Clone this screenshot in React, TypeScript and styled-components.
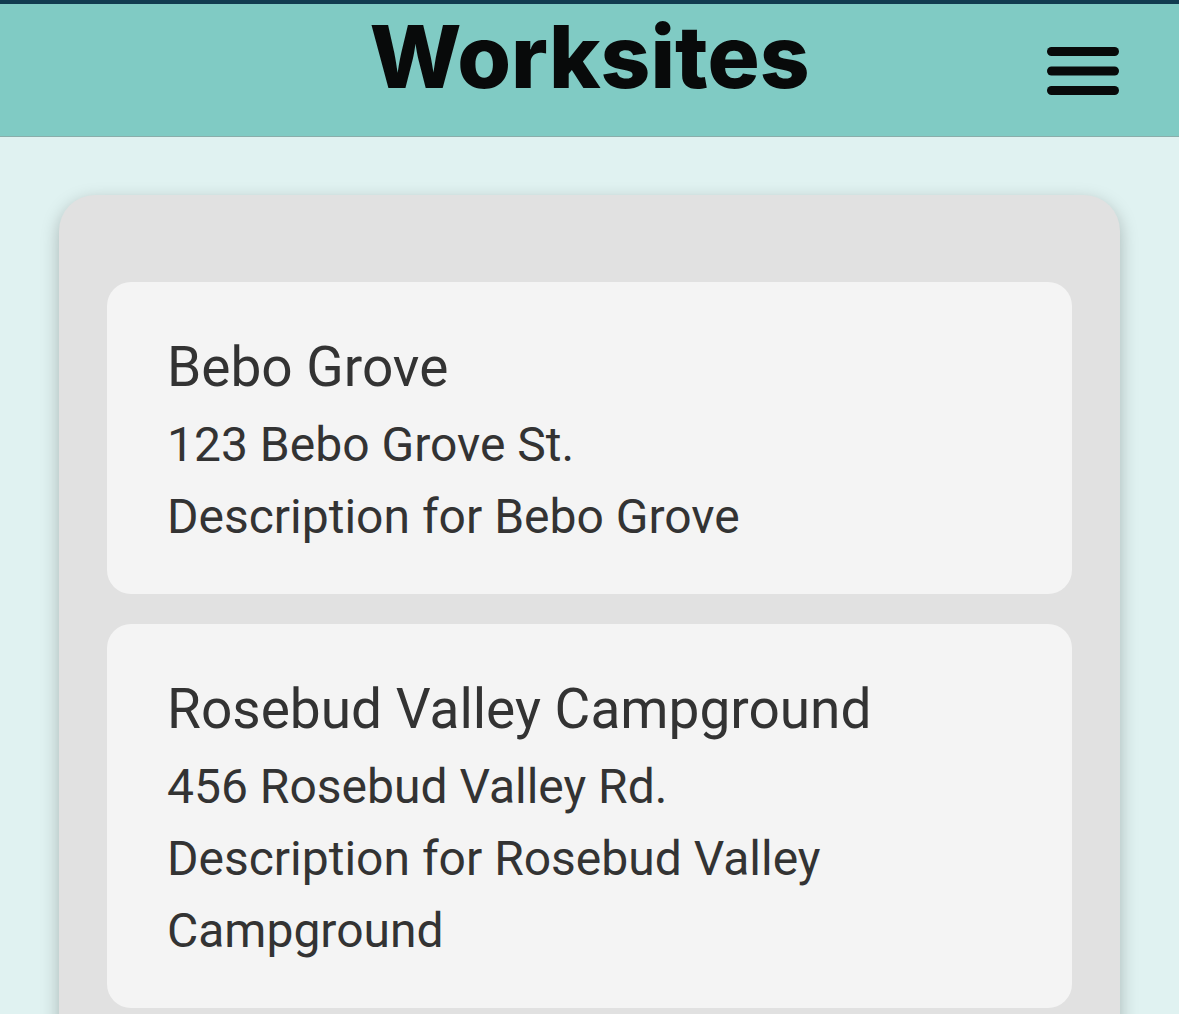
import React from "react";
import styled, { createGlobalStyle } from "styled-components";

const GlobalStyle = createGlobalStyle`
  * { box-sizing: border-box; }
  body {
    margin: 0;
    background: #e0f2f1;
    color: #333333;
    font-family: Roboto, "Liberation Sans", sans-serif;
  }
  #root { height: 100vh; overflow: hidden; }
`;

const Header = styled.header`
  display: grid;
  grid-template-columns: 1fr auto 1fr;
  height: 137px;
  border-top: 4px solid #113c50;
  border-bottom: 1px solid #8aaeab;
  background: #80cbc4;
`;

const Title = styled.h1`
  grid-column: 2;
  margin: 0;
  color: #080a0a;
  font: 800 87px/106px Inter, sans-serif;
`;

const MenuButton = styled.button`
  justify-self: end;
  display: flex;
  align-items: center;
  padding: 2px 60px 0 0;
  border: 0;
  background: none;
  color: #080a0a;
`;

const Main = styled.main`
  padding: 58px 59px;
`;

const Panel = styled.ul`
  display: flex;
  flex-direction: column;
  gap: 30px;
  margin: 0;
  padding: 87px 48px;
  list-style: none;
  border-radius: 36px;
  background: #e1e1e1;
  box-shadow: 0 6px 18px rgba(0, 0, 0, 0.25);
`;

const Card = styled.li`
  padding: 48px 60px 41px;
  border-radius: 24px;
  background: #f4f4f4;
`;

const Name = styled.h2`
  margin: 0 0 5px;
  font-size: 55px;
  font-weight: 400;
  line-height: 74px;
`;

const Detail = styled.p`
  margin: 0;
  font-size: 48px;
  line-height: 72px;
`;

const worksites = [
  { name: "Bebo Grove", address: "123 Bebo Grove St." },
  { name: "Rosebud Valley Campground", address: "456 Rosebud Valley Rd." },
];

export default function App() {
  return (
    <>
      <GlobalStyle />
      <Header>
        <Title>Worksites</Title>
        <MenuButton type="button" aria-label="Open menu">
          <svg width="72" height="48" viewBox="0 0 72 48" fill="currentColor" aria-hidden="true">
            <rect width="72" height="9" rx="4.5" />
            <rect y="19.5" width="72" height="9" rx="4.5" />
            <rect y="39" width="72" height="9" rx="4.5" />
          </svg>
        </MenuButton>
      </Header>
      <Main>
        <Panel>
          {worksites.map(({ name, address }) => (
            <Card key={name}>
              <Name>{name}</Name>
              <Detail>{address}</Detail>
              <Detail>{`Description for ${name}`}</Detail>
            </Card>
          ))}
        </Panel>
      </Main>
    </>
  );
}
